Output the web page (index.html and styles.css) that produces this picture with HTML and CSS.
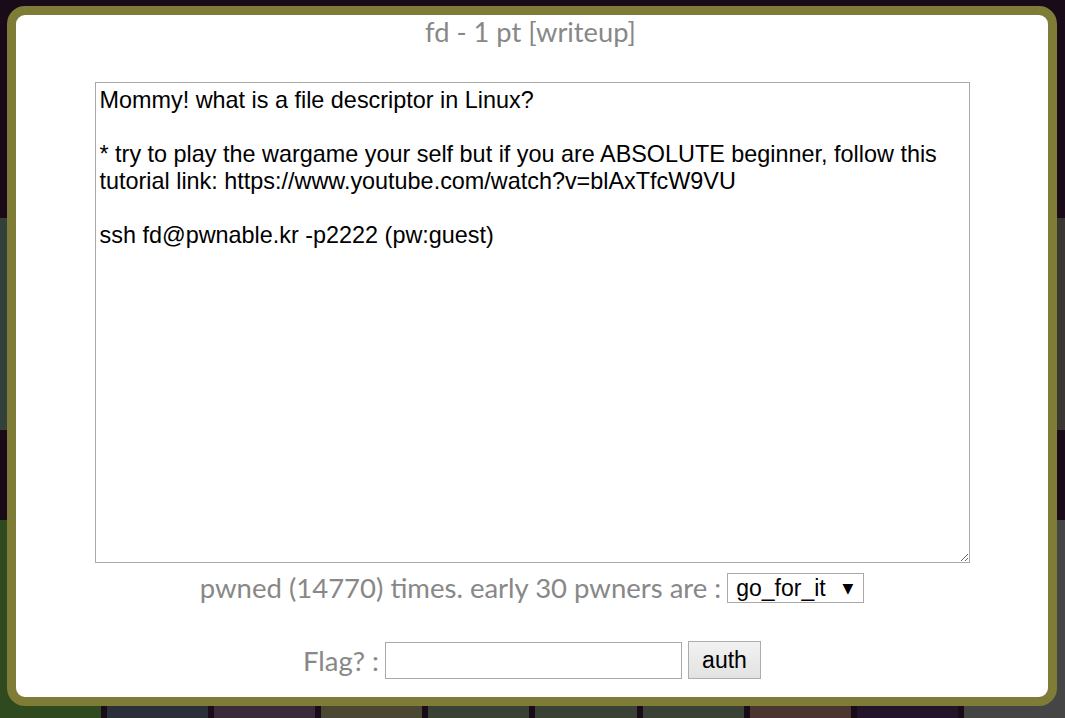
FILE: index.html
```html
<!DOCTYPE html>
<html>
<head>
<meta charset="utf-8">
<title>fd</title>
<link rel="stylesheet" href="styles.css">
</head>
<body>
<div class="board">
  <div class="tile t1"></div><div class="tile t2"></div><div class="tile t3"></div><div class="tile t4"></div><div class="tile t5"></div><div class="tile t6"></div><div class="tile t7"></div><div class="tile t8"></div><div class="tile t9"></div><div class="tile t10"></div>
  <div class="tile t11"></div><div class="tile t12"></div><div class="tile t13"></div><div class="tile t14"></div><div class="tile t15"></div><div class="tile t16"></div><div class="tile t17"></div><div class="tile t18"></div><div class="tile t19"></div><div class="tile t20"></div>
</div>
<div class="modal">
  <div class="title">fd - 1 pt [writeup]</div>
  <textarea class="desc" readonly>Mommy! what is a file descriptor in Linux?

* try to play the wargame your self but if you are ABSOLUTE beginner, follow this tutorial link: https://www.youtube.com/watch?v=blAxTfcW9VU

ssh fd@pwnable.kr -p2222 (pw:guest)
</textarea>
  <div class="row pwned">
    <span class="label">pwned (14770) times. early 30 pwners are :</span>
    <span class="select-wrap"><select class="pick"><option>go_for_it</option></select></span>
  </div>
  <div class="row flag">
    <span class="label">Flag? :</span>
    <input class="flag-input" type="text">
    <button class="auth">auth</button>
  </div>
</div>
</body>
</html>
```
FILE: styles.css
```css
html, body {
  margin: 0;
  padding: 0;
  width: 1065px;
  height: 718px;
  overflow: hidden;
  background: #1a0b19;
}
.board {
  display: grid;
  grid-template-columns: repeat(10, 1fr);
  grid-template-rows: 212px 212px;
  column-gap: 6px;
  row-gap: 90px;
  padding-top: 218px;
}
.tile { background: #3a4236; }
.t1 { background: #34413a; }
.t10 { background: #3a3631; }
.t11 { background: #2f4a1f; }
.t12 { background: #2a2f3a; }
.t13 { background: #3a2a3a; }
.t14 { background: #4a4830; }
.t18 { background: #4a3530; }
.t19 { background: #24142a; }
.t20 { background: #454545; }
.modal {
  position: fixed;
  left: 7px;
  top: 6px;
  width: 1050px;
  height: 700px;
  box-sizing: border-box;
  border: 9px solid #7e7c37;
  border-radius: 18px;
  background: #fff;
  display: flex;
  flex-direction: column;
  align-items: center;
}
.title {
  font-family: Lato, "Liberation Sans", sans-serif;
  font-size: 27.3px;
  line-height: 32px;
  color: #888;
  margin-top: 1px;
  margin-left: -3px;
}
.desc {
  display: block;
  margin-top: 34px;
  width: 875px;
  height: 481px;
  box-sizing: border-box;
  border: 1px solid #a9a9a9;
  padding: 4px 4px;
  font-family: "Liberation Sans", Arial, sans-serif;
  font-size: 23.4px;
  line-height: 27px;
  color: #000;
  resize: both;
  outline: none;
}
.row {
  display: flex;
  align-items: center;
  font-family: Lato, "Liberation Sans", sans-serif;
  font-size: 27.5px;
  line-height: 33px;
  color: #888;
}
.pwned { margin-top: 8px; gap: 6px; }
.flag { margin-top: 37px; gap: 6px; }
.select-wrap { position: relative; display: flex; }
.select-wrap::after {
  content: "\25BC";
  position: absolute;
  right: 11px;
  top: 7px;
  font-family: "DejaVu Sans", sans-serif;
  font-size: 14px;
  line-height: 16px;
  color: #000;
  pointer-events: none;
}
.pick {
  appearance: none;
  -webkit-appearance: none;
  width: 137px;
  height: 30px;
  box-sizing: border-box;
  border: 1px solid #a9a9a9;
  border-radius: 0;
  background: #fff;
  padding: 0 0 0 8px;
  font-family: "Liberation Sans", Arial, sans-serif;
  font-size: 23px;
  color: #000;
}
.flag-input {
  width: 297px;
  height: 37px;
  box-sizing: border-box;
  border: 1px solid #a9a9a9;
  padding: 2px 4px;
  font-family: "Liberation Sans", Arial, sans-serif;
  font-size: 23px;
}
.auth {
  width: 73px;
  height: 38px;
  box-sizing: border-box;
  border: 1px solid #adadad;
  border-radius: 0;
  background: linear-gradient(#f2f2f2, #e2e2e2);
  font-family: "Liberation Sans", Arial, sans-serif;
  font-size: 23px;
  color: #000;
  padding: 0;
}
```
